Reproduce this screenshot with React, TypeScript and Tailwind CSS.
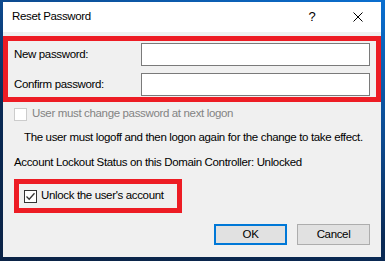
import React from "react";

function Check({ checked, disabled }: { checked?: boolean; disabled?: boolean }) {
  return (
    <div
      className={
        "w-[13px] h-[13px] shrink-0 border bg-white flex items-center justify-center " +
        (disabled ? "border-[#cccccc]" : "border-[#333333]")
      }
    >
      {checked && (
        <svg width="11" height="11" viewBox="0 0 11 11">
          <polyline points="1.5,5.5 4.2,8.2 9.5,2.2" fill="none" stroke="#333333" strokeWidth="1.3" />
        </svg>
      )}
    </div>
  );
}

export default function App() {
  return (
    <div
      className="w-[385px] h-[261px] pt-[2px] pl-[3px] overflow-hidden bg-[linear-gradient(200deg,#0a6fd0_0%,#0d4a8f_35%,#0a2a55_60%,#0b2346_100%)]"
      style={{ fontFamily: '"Liberation Sans", Arial, sans-serif' }}
    >
      <div className="w-[378px] h-[255px] bg-[#f0f0f0] flex flex-col text-[11.5px] tracking-[-0.35px] text-black whitespace-nowrap">
        {/* Title bar */}
        <div className="h-[30px] bg-white flex items-center pl-[9px] shrink-0">
          <span>Reset Password</span>
          <div className="ml-auto flex h-full">
            <div className="w-[46px] h-full flex items-center justify-center text-[13px] tracking-normal">?</div>
            <div className="w-[46px] h-full flex items-center justify-center">
              <svg width="10" height="10" viewBox="0 0 10 10">
                <line x1="0.5" y1="0.5" x2="9.5" y2="9.5" stroke="#000" strokeWidth="1" />
                <line x1="9.5" y1="0.5" x2="0.5" y2="9.5" stroke="#000" strokeWidth="1" />
              </svg>
            </div>
          </div>
        </div>

        {/* Password fields */}
        <div className="mt-[4px] h-[66px] border-[5px] border-[#ed1c24] pt-[2px] pl-[6px] pr-[6px] flex flex-col gap-[7px]">
          <div className="h-[23px] flex items-center">
            <span className="w-[127px] shrink-0">New password:</span>
            <div className="w-[230px] h-[23px] bg-white border border-[#7a7a7a]" />
          </div>
          <div className="h-[23px] flex items-center">
            <span className="w-[127px] shrink-0">Confirm password:</span>
            <div className="w-[230px] h-[23px] bg-white border border-[#7a7a7a]" />
          </div>
        </div>

        {/* Disabled checkbox */}
        <div className="mt-[4px] h-[16px] pl-[11px] flex items-center gap-[5px]">
          <Check disabled />
          <span className="text-[#838383]">User must change password at next logon</span>
        </div>

        <div className="mt-[8px] h-[16px] pl-[21px] flex items-center">
          The user must logoff and then logon again for the change to take effect.
        </div>

        <div className="mt-[9px] h-[16px] pl-[11px] flex items-center">
          Account Lockout Status on this Domain Controller: Unlocked
        </div>

        {/* Unlock checkbox */}
        <div className="ml-[11px] mt-[8px] w-[168px] h-[34px] border-[5px] border-[#ed1c24] pl-[5px] flex items-center gap-[4px]">
          <Check checked />
          <span>Unlock the user's account</span>
        </div>

        {/* Buttons */}
        <div className="mt-[11px] pr-[11px] flex justify-end gap-[10px]">
          <div className="w-[73px] h-[21px] bg-[#e1e1e1] border-2 border-[#0078d7] flex items-center justify-center">
            OK
          </div>
          <div className="w-[73px] h-[21px] bg-[#e1e1e1] border border-[#adadad] flex items-center justify-center">
            Cancel
          </div>
        </div>
      </div>
    </div>
  );
}
